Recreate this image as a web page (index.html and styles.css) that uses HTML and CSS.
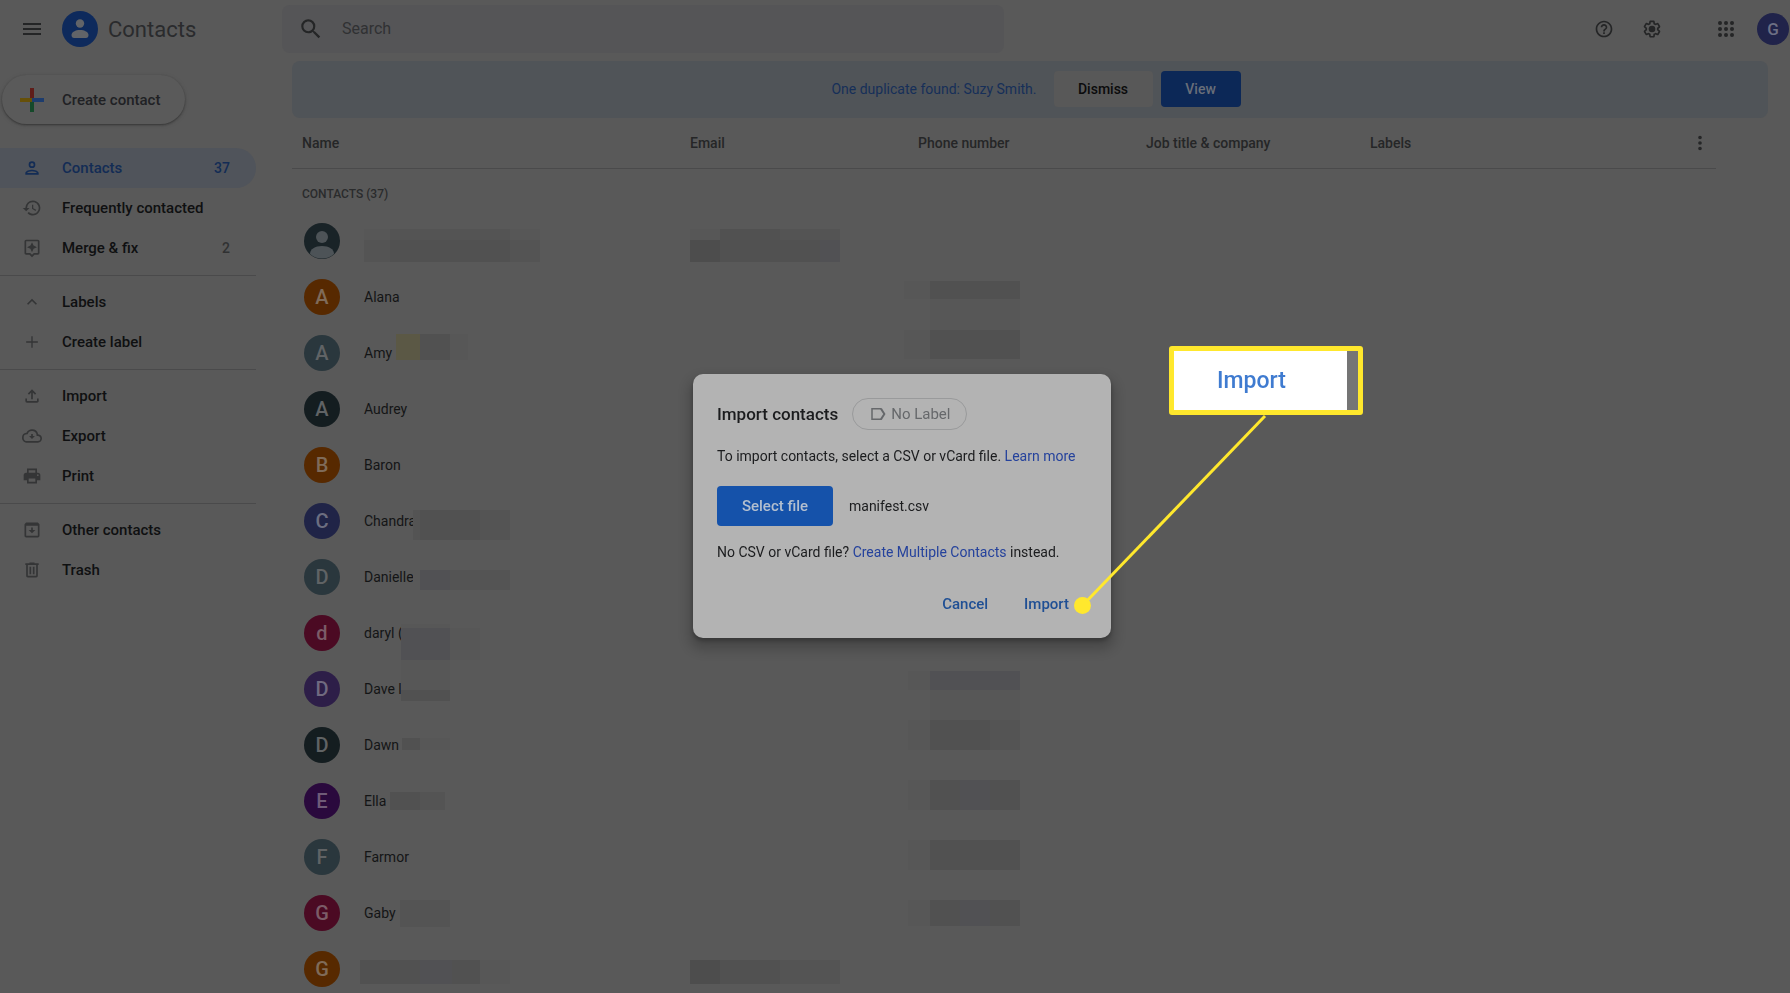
FILE: index.html
```html
<!DOCTYPE html>
<html lang="en">
<head>
<meta charset="utf-8">
<title>Contacts</title>
<link rel="stylesheet" href="styles.css">
</head>
<body>
<header class="topbar">
  <button class="icon-btn menu" aria-label="Main menu"><svg width="24" height="24" viewBox="0 0 24 24"><path d="M3 18h18v-2H3v2zm0-5h18v-2H3v2zm0-7v2h18V6H3z"/></svg></button>
  <a class="brand" href="#">
    <svg width="36" height="36" viewBox="0 0 36 36"><circle cx="18" cy="18" r="18" fill="#0e2a5c"/><circle cx="18" cy="12.500" r="4.200" fill="#626468"/><path d="M9.500 24c0-3 4-5 8.500-5s8.500 2 8.500 5c0 2-1 3-2.500 3H12c-1.500 0-2.500-1-2.500-3z" fill="#626468"/></svg>
    <span>Contacts</span>
  </a>
  <label class="search">
    <svg width="26" height="26" viewBox="0 0 24 24"><path d="M15.500 14h-.79l-.28-.27A6.470 6.470 0 0 0 16 9.500 6.500 6.500 0 1 0 9.500 16c1.610 0 3.090-.59 4.230-1.570l.27.28v.79l5 4.990L20.490 19l-4.990-5zm-6 0C7.010 14 5 11.990 5 9.500S7.010 5 9.500 5 14 7.010 14 9.500 11.990 14 9.500 14z"/></svg>
    <input type="text" placeholder="Search" aria-label="Search">
  </label>
  <div class="tools">
    <button class="icon-btn" aria-label="Help"><svg width="20" height="20" viewBox="0 0 24 24"><path d="M11 18h2v-2h-2v2zm1-16C6.480 2 2 6.480 2 12s4.480 10 10 10 10-4.480 10-10S17.520 2 12 2zm0 18c-4.410 0-8-3.590-8-8s3.590-8 8-8 8 3.590 8 8-3.590 8-8 8zm0-14c-2.210 0-4 1.790-4 4h2c0-1.100.9-2 2-2s2 .9 2 2c0 2-3 1.750-3 5h2c0-2.250 3-2.500 3-5 0-2.210-1.790-4-4-4z"/></svg></button>
    <button class="icon-btn gear" aria-label="Settings"><svg width="20" height="20" viewBox="0 0 24 24"><path d="M13.850 22.250h-3.700c-.74 0-1.360-.54-1.450-1.270l-.27-1.890c-.27-.14-.53-.29-.79-.46l-1.800.72c-.7.260-1.470-.03-1.810-.65L2.200 15.530c-.35-.66-.2-1.440.36-1.880l1.530-1.190c-.01-.15-.02-.3-.02-.46 0-.15.010-.31.020-.46l-1.520-1.190c-.59-.45-.74-1.260-.37-1.880l1.850-3.190c.34-.62 1.110-.9 1.790-.63l1.810.73c.26-.17.520-.32.780-.46l.27-1.910c.09-.7.710-1.250 1.440-1.250h3.700c.74 0 1.360.54 1.450 1.270l.27 1.890c.27.14.530.29.790.46l1.800-.72c.71-.26 1.480.03 1.820.65l1.840 3.180c.36.66.2 1.440-.36 1.880l-1.520 1.190c.01.15.020.3.020.46s-.01.31-.02.46l1.520 1.190c.56.45.720 1.230.370 1.860l-1.860 3.220c-.34.62-1.110.9-1.800.63l-1.800-.72c-.26.17-.52.32-.78.46l-.27 1.910c-.1.680-.72 1.220-1.460 1.220zm-3.230-2h2.760l.37-2.550.53-.22c.44-.18.880-.44 1.340-.78l.45-.34 2.380.96 1.380-2.400-2.030-1.580.07-.56c.03-.26.060-.51.060-.78s-.03-.53-.06-.78l-.07-.56 2.030-1.580-1.390-2.400-2.390.96-.45-.35c-.42-.32-.87-.58-1.330-.77l-.52-.22-.37-2.550h-2.760l-.37 2.550-.53.21c-.44.19-.88.440-1.340.790l-.45.33-2.380-.95-1.390 2.390 2.030 1.580-.07.56a7 7 0 0 0-.06.79c0 .26.020.53.060.78l.07.56-2.030 1.580 1.380 2.400 2.390-.96.450.35c.43.33.860.58 1.330.77l.53.22.380 2.550z"/><circle cx="12" cy="12" r="4"/></svg></button>
    <button class="icon-btn" aria-label="Apps"><svg width="24" height="24" viewBox="0 0 24 24"><path d="M6 8a2 2 0 1 0 0-4 2 2 0 0 0 0 4zm6 12a2 2 0 1 0 0-4 2 2 0 0 0 0 4zm-6 0a2 2 0 1 0 0-4 2 2 0 0 0 0 4zm0-6a2 2 0 1 0 0-4 2 2 0 0 0 0 4zm6 0a2 2 0 1 0 0-4 2 2 0 0 0 0 4zm4-8a2 2 0 1 0 4 0 2 2 0 0 0-4 0zm-4 2a2 2 0 1 0 0-4 2 2 0 0 0 0 4zm6 6a2 2 0 1 0 0-4 2 2 0 0 0 0 4zm0 6a2 2 0 1 0 0-4 2 2 0 0 0 0 4z"/></svg></button>
    <button class="account" aria-label="Account">G</button>
  </div>
</header>

<div class="layout">
  <aside class="sidebar">
    <button class="create">
      <svg width="24" height="24" viewBox="0 0 24 24"><path d="M10 0h4v12h-4z" fill="#5f1d19"/><path d="M10 12h4v12h-4z" fill="#15492a"/><path d="M0 10h12v4H0z" fill="#665008"/><path d="M12 10h12v4H12z" fill="#1d3c6d"/></svg>
      <span>Create contact</span>
    </button>
    <nav class="nav">
      <a class="item active" href="#"><svg width="20" height="20" viewBox="0 0 24 24"><path d="M12 6a2 2 0 1 1 0 4 2 2 0 0 1 0-4m0 10c2.700 0 5.800 1.290 6 2H6c.23-.72 3.310-2 6-2m0-12a4 4 0 1 0 0 8 4 4 0 0 0 0-8zm0 10c-2.670 0-8 1.340-8 4v2h16v-2c0-2.660-5.330-4-8-4z"/></svg><span>Contacts</span><span class="count">37</span></a>
      <a class="item" href="#"><svg width="20" height="20" viewBox="0 0 24 24"><path d="M13 3a9 9 0 0 0-9 9H1l4 4 4-4H6a7 7 0 1 1 2.060 4.940l-1.420 1.420A9 9 0 1 0 13 3zm-1 5v5l4.250 2.520.77-1.280-3.520-2.090V8H12z"/></svg><span>Frequently contacted</span></a>
      <a class="item" href="#"><svg width="20" height="20" viewBox="0 0 24 24"><path d="M19 2H5a2 2 0 0 0-2 2v14c0 1.100.9 2 2 2h4l3 3 3-3h4a2 2 0 0 0 2-2V4a2 2 0 0 0-2-2zm0 16h-4.830L12 20.170 9.830 18H5V4h14v14zm-7-1 1.880-4.120L18 11l-4.120-1.880L12 5l-1.880 4.120L6 11l4.120 1.880z"/></svg><span>Merge &amp; fix</span><span class="count">2</span></a>
      <hr>
      <a class="item" href="#"><svg width="20" height="20" viewBox="0 0 24 24"><path d="m12 8-6 6 1.410 1.410L12 10.830l4.590 4.580L18 14z"/></svg><span>Labels</span></a>
      <a class="item" href="#"><svg width="20" height="20" viewBox="0 0 24 24"><path d="M19 12.800h-6.200V19h-1.600v-6.200H5v-1.600h6.200V5h1.600v6.200H19z"/></svg><span>Create label</span></a>
      <hr>
      <a class="item" href="#"><svg width="20" height="20" viewBox="0 0 24 24"><path d="M11 16V7.800L8.400 10.400 7 9l5-5 5 5-1.400 1.400L13 7.800V16zM4 15h2v3h12v-3h2v3c0 1.100-.9 2-2 2H6a2 2 0 0 1-2-2z"/></svg><span>Import</span></a>
      <a class="item" href="#"><svg width="20" height="20" viewBox="0 0 24 24"><path d="M19.350 10.040A7.490 7.490 0 0 0 12 4C9.110 4 6.600 5.640 5.350 8.040A5.990 5.990 0 0 0 0 14c0 3.310 2.690 6 6 6h13c2.760 0 5-2.240 5-5 0-2.640-2.050-4.780-4.650-4.960zM19 18H6a4 4 0 0 1 0-8h.71a5.500 5.500 0 0 1 10.790 1.500v.5H19a3 3 0 0 1 0 6zM13 9.500h-2V12H8.500l3.500 3.500 3.500-3.500H13z"/></svg><span>Export</span></a>
      <a class="item" href="#"><svg width="20" height="20" viewBox="0 0 24 24"><path d="M19 8h-1V3H6v5H5a3 3 0 0 0-3 3v6h4v4h12v-4h4v-6a3 3 0 0 0-3-3zM8 5h8v3H8V5zm8 14H8v-4h8v4zm3-7a1 1 0 1 1 0-2 1 1 0 0 1 0 2z"/></svg><span>Print</span></a>
      <hr>
      <a class="item" href="#"><svg width="20" height="20" viewBox="0 0 24 24"><path d="M19 3H5L3 5v14c0 1.100.9 2 2 2h14a2 2 0 0 0 2-2V5zm0 16H5V7h14zM11 9h2v3h3l-4 4-4-4h3z"/></svg><span>Other contacts</span></a>
      <a class="item" href="#"><svg width="20" height="20" viewBox="0 0 24 24"><path d="M15 3H9v1H4v2h1v13c0 1.100.9 2 2 2h10a2 2 0 0 0 2-2V6h1V4h-5zm2 16H7V6h10zM9 8h2v9H9zm4 0h2v9h-2z"/></svg><span>Trash</span></a>
    </nav>
  </aside>

  <main class="main">
    <section class="banner">
      <p>One duplicate found: Suzy Smith.</p>
      <button class="dismiss">Dismiss</button>
      <button class="view">View</button>
    </section>
    <div class="list">
      <table>
        <colgroup><col class="c-name"><col class="c-mail"><col class="c-phone"><col class="c-job"><col></colgroup>
        <thead>
          <tr><th>Name</th><th>Email</th><th>Phone number</th><th>Job title &amp; company</th><th><div class="last"><span>Labels</span><button class="icon-btn" aria-label="List settings"><svg width="22" height="22" viewBox="0 0 24 24"><path d="M12 8a2 2 0 1 0 0-4 2 2 0 0 0 0 4zm0 2a2 2 0 1 0 0 4 2 2 0 0 0 0-4zm0 6a2 2 0 1 0 0 4 2 2 0 0 0 0-4z"/></svg></button></div></th></tr>
        </thead>
        <tbody>
          <tr class="group"><td colspan="5">CONTACTS (37)</td></tr>
          <tr><td><div class="person"><svg width="36" height="36" viewBox="0 0 36 36"><circle cx="18" cy="18" r="18" fill="#192327"/><circle cx="18" cy="14" r="6" fill="#4d5357"/><path d="M6 31c0-5 5-8 12-8s12 3 12 8a18 18 0 0 1-24 0z" fill="#4d5357"/></svg></div></td><td></td><td></td><td></td><td></td></tr>
          <tr><td><div class="person"><span class="avatar orange">A</span>Alana</div></td><td></td><td></td><td></td><td></td></tr>
          <tr><td><div class="person"><span class="avatar slate">A</span>Amy</div></td><td></td><td></td><td></td><td></td></tr>
          <tr><td><div class="person"><span class="avatar dark">A</span>Audrey</div></td><td></td><td></td><td></td><td></td></tr>
          <tr><td><div class="person"><span class="avatar orange">B</span>Baron</div></td><td></td><td></td><td></td><td></td></tr>
          <tr><td><div class="person"><span class="avatar indigo">C</span>Chandra</div></td><td></td><td></td><td></td><td></td></tr>
          <tr><td><div class="person"><span class="avatar slate">D</span>Danielle</div></td><td></td><td></td><td></td><td></td></tr>
          <tr><td><div class="person"><span class="avatar pink">d</span>daryl (</div></td><td></td><td></td><td></td><td></td></tr>
          <tr><td><div class="person"><span class="avatar violet">D</span>Dave l</div></td><td></td><td></td><td></td><td></td></tr>
          <tr><td><div class="person"><span class="avatar dark">D</span>Dawn</div></td><td></td><td></td><td></td><td></td></tr>
          <tr><td><div class="person"><span class="avatar purple">E</span>Ella</div></td><td></td><td></td><td></td><td></td></tr>
          <tr><td><div class="person"><span class="avatar slate">F</span>Farmor</div></td><td></td><td></td><td></td><td></td></tr>
          <tr><td><div class="person"><span class="avatar pink">G</span>Gaby</div></td><td></td><td></td><td></td><td></td></tr>
          <tr><td><div class="person"><span class="avatar orange">G</span></div></td><td></td><td></td><td></td><td></td></tr>
        </tbody>
      </table>
      <!-- pixelated blocks that hide private details -->
      <svg class="mosaic" width="760" height="875" viewBox="292 118 760 875" aria-hidden="true">
        <g fill="#515151">
          <path d="M390 240h120v22H390zM720 229h60v33h-60zM780 240h40v22h-40zM930 281h90v18h-90zM930 330h90v29h-90zM420 334h30v26h-30zM420 510h60v30h-60zM930 720h60v30h-60zM930 780h90v30h-90zM930 840h90v30h-90zM930 900h90v26h-90zM390 792h30v18h-30zM402 738h18v12h-18zM401 690h49v11h-49zM360 960h120v24H360zM690 960h90v24h-90z"/>
        </g>
        <g fill="#545454">
          <path d="M390 229h120v11H390zM364 240h26v22h-26zM510 240h30v22h-30zM780 229h60v11h-60zM413 510h7v30h-7zM480 510h30v30h-30zM450 570h60v20h-60zM420 792h25v18h-25zM400 900h50v27h-50zM990 720h30v30h-30zM780 960h60v24h-60z"/>
        </g>
        <g fill="#575757">
          <path d="M364 229h26v11h-26zM510 229h30v11h-30zM690 229h30v11h-30zM904 281h26v18h-26zM904 330h26v29h-26zM930 299h90v31h-90zM450 334h18v26h-18zM401 624h49v6h-49zM450 628h30v32h-30zM401 660h49v30h-49zM420 738h30v12h-30zM480 960h30v24h-30zM908 671h22v19h-22zM930 690h90v30h-90zM908 720h22v30h-22zM908 780h22v30h-22zM908 840h22v30h-22zM908 900h22v26h-22z"/>
        </g>
        <path fill="#4d4d4d" d="M690 240h30v22h-30zM690 960h30v24h-30z"/>
        <path fill="#515154" d="M820 240h20v22h-20zM420 570h30v20h-30zM401 628h49v32h-49zM930 671h90v19h-90zM960 780h30v30h-30zM960 900h30v26h-30zM420 960h32v24h-32z"/>
        <path fill="#5b5845" d="M396 334h24v26h-24z"/>
        <path fill="#595959" d="M413 565h7v30h-7z"/>
      </svg>
    </div>
  </main>
</div>

<div class="overlay">
  <div class="dialog" role="dialog" aria-labelledby="dialog-title">
    <div class="dialog-head">
      <h2 id="dialog-title">Import contacts</h2>
      <button class="chip"><svg width="18" height="18" viewBox="0 0 24 24"><path d="M15 6H5v12h10l4-6zM3 4h13c.6 0 1 .3 1.400.8L22 12l-4.600 7.200c-.4.500-.8.800-1.400.8H3z"/></svg>No Label</button>
    </div>
    <p>To import contacts, select a CSV or vCard file. <a href="#">Learn more</a></p>
    <div class="file"><button class="select">Select file</button><span>manifest.csv</span></div>
    <p>No CSV or vCard file? <a href="#">Create Multiple Contacts</a> instead.</p>
    <div class="actions"><button>Cancel</button><button>Import</button></div>
    <svg class="pointer" width="200" height="210" viewBox="0 0 200 210" aria-hidden="true"><path d="M9.500 198.500 192 9" stroke="#ffe82d" stroke-width="3"/><circle cx="9.500" cy="198.500" r="8.500" fill="#ffe82d"/></svg>
    <div class="callout">Import</div>
  </div>
</div>
</body>
</html>
```
FILE: styles.css
```css
* { box-sizing: border-box; }

body {
  margin: 0;
  height: 100vh;
  overflow: hidden;
  background: #595959;
  color: #141516;
  font: 14px/20px Roboto, "Noto Sans", sans-serif;
}

button, input { font: inherit; color: inherit; border: 0; background: none; padding: 0; }
a { color: inherit; text-decoration: none; }
svg { display: block; flex: none; fill: currentColor; }
p, h2 { margin: 0; }

.topbar { display: flex; align-items: center; height: 58px; padding-right: 1px; color: #242526; }
.icon-btn { display: grid; place-items: center; width: 24px; height: 24px; }
.menu { margin-left: 20px; }
.brand { display: flex; align-items: center; gap: 10px; width: 220px; margin-left: 18px; font-size: 22px; line-height: 28px; color: #2a2b2d; }
.brand span { padding-top: 2px; }
.search { display: flex; align-items: center; gap: 18px; width: 722px; height: 48px; padding-left: 16px; border-radius: 8px; background: #555557; }
.search input { flex: 1; font-size: 16px; outline: 0; }
.search input::placeholder { color: #303133; opacity: 1; }
.tools { display: flex; align-items: center; margin-left: auto; }
.gear { margin: 0 50px 0 24px; }
.account { width: 32px; height: 32px; margin-left: 19px; border-radius: 50%; background: #20234a; color: #6c6f84; font-size: 17px; font-weight: 500; }

.layout { display: flex; align-items: flex-start; }
.sidebar { flex: none; width: 256px; padding-top: 17px; }
.create { display: flex; align-items: center; gap: 18px; height: 49px; margin-left: 2px; padding: 0 25px 0 18px; border-radius: 25px; font-size: 15px; font-weight: 500; color: #202124; background: #5a5a5a; box-shadow: 0 1px 2px #383838, 0 1px 3px 1px #525252; }
.nav { margin-top: 24px; font-size: 15px; font-weight: 500; }
.item { display: flex; align-items: center; gap: 20px; height: 40px; padding: 0 26px 0 22px; color: #0f1011; }
.item svg { color: #343536; }
.item.active, .item.active svg { color: #132c55; }
.item.active { border-radius: 0 20px 20px 0; background: #50545b; }
.count { margin-left: auto; font-size: 14px; color: #303132; }
.active .count { color: #132c55; }
.nav hr { height: 1px; margin: 7px 0 6px; border: 0; background: #4a4a4b; }

.main { flex: 1; min-width: 0; padding: 3px 22px 0 36px; }
.banner { display: flex; align-items: center; justify-content: center; height: 57px; padding: 0 0 2px 12px; border-radius: 8px; background: #505458; color: #162f58; }
.banner p { margin-right: 17px; }
.banner button { height: 36px; border-radius: 4px; font-weight: 500; }
.dismiss { width: 99px; margin-right: 8px; background: #585858; color: #0b0b0c; }
.view { width: 80px; background: #0c2857; color: #686e79; }

.list { position: relative; padding-right: 52px; }
table { width: 100%; table-layout: fixed; border-collapse: collapse; }
.c-name { width: 398px; }
.c-mail, .c-phone { width: 228px; }
.c-job { width: 224px; }
th { height: 50px; padding: 0; border-bottom: 1px solid #4a4a4b; text-align: left; font-weight: 500; color: #252627; }
th:first-child, td:first-child { padding-left: 10px; }
.last { display: flex; align-items: center; justify-content: space-between; padding-right: 4px; }
td { height: 56px; padding: 0; }
.group td { height: 45px; padding-top: 7px; font-size: 12px; font-weight: 500; color: #2a2b2c; }
.person { display: flex; align-items: center; gap: 24px; padding-left: 2px; }
.avatar { display: grid; place-items: center; width: 36px; height: 36px; border-radius: 50%; font-size: 20px; font-weight: 500; color: #606365; }
.orange { background: #572900; color: #7f6b59; }
.slate { background: #2a373d; }
.dark { background: #141d20; }
.indigo { background: #202447; color: #6c6e80; }
.pink { background: #4b0a23; color: #7b5c68; }
.violet { background: #2d1e48; color: #706a80; }
.purple { background: #2a093d; color: #6f5b78; }
.mosaic { position: absolute; top: 0; left: 0; }

.overlay { position: fixed; inset: 0; display: grid; place-items: center; padding: 19px 0 0 14px; }
.dialog { position: relative; width: 418px; padding: 24px; border-radius: 10px; background: #b3b3b3; color: #1b1c1e; box-shadow: 0 8px 12px 4px #00000030, 0 3px 4px #00000040; }
.dialog-head { display: flex; align-items: center; gap: 14px; height: 32px; margin-bottom: 16px; }
.dialog h2 { font-size: 17px; line-height: 24px; font-weight: 500; }
.chip { display: flex; align-items: center; gap: 4px; height: 32px; padding: 0 16px; border: 1px solid #999a9b; border-radius: 16px; color: #66686b; font-size: 15px; }
.dialog a { color: #25429c; }
.file { display: flex; align-items: center; gap: 16px; margin: 20px 0 16px; }
.select { width: 116px; height: 40px; border-radius: 4px; background: #1552aa; color: #b3bfcf; font-size: 15px; font-weight: 500; }
.actions { display: flex; justify-content: flex-end; gap: 36px; margin-top: 24px; padding: 8px 18px 0 0; font-size: 15px; font-weight: 500; color: #1f4f94; }
.pointer { position: absolute; left: 380px; top: 33px; }
.callout { position: absolute; left: 476px; top: -28px; width: 194px; height: 69px; border: 5px solid #ffe82d; border-radius: 3px; padding-left: 43px; background: linear-gradient(to left, #757575 11px, #fff 11px); color: #3f7bd0; font-size: 23px; line-height: 59px; font-weight: 500; }
```
